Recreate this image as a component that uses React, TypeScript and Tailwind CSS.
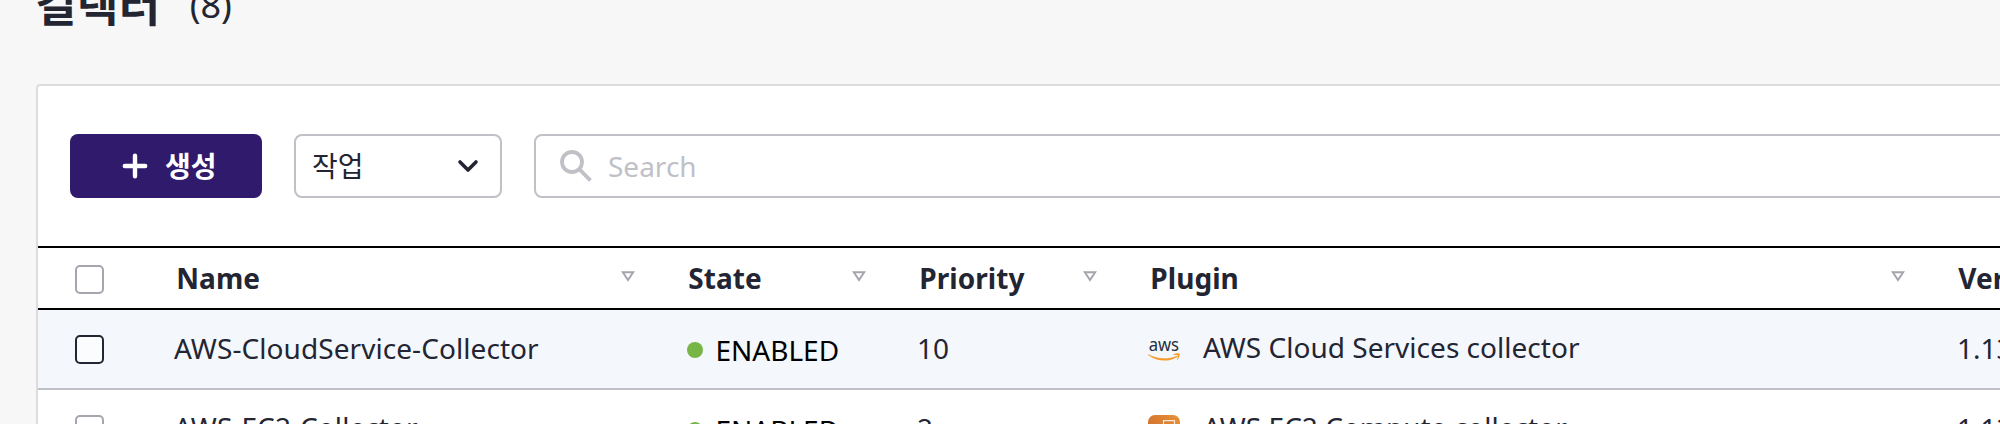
import type { ReactNode } from "react";

const GRID = "grid grid-cols-[106px_512px_231px_231px_808px_400px]";

function Checkbox({ active = false }: { active?: boolean }) {
  return (
    <span
      className={
        active
          ? "block size-[29px] rounded-[5px] border-2 border-[#232533] bg-white/60"
          : "block size-[29px] rounded-[5px] border-2 border-[#a5a5ae] bg-white"
      }
    />
  );
}

function HeadCell({ label }: { label: string }) {
  return (
    <div className="flex items-center justify-between pl-[32.3px] pr-[21px]">
      <span className="text-[28px] leading-[40px] font-bold tracking-[0.05px]">{label}</span>
      <svg className="mb-[4px] h-[11px] w-[14px]" viewBox="0 0 14 11" fill="none">
        <path d="M1.8 1.2h10.4L7 9z" stroke="#a5a5ae" strokeWidth="2" />
      </svg>
    </div>
  );
}

function AwsLogo() {
  return (
    <svg className="size-[32px]" viewBox="0 0 32 32">
      <text
        x="0.7"
        y="16"
        fontSize="18.5"
        textLength="30.4"
        lengthAdjust="spacingAndGlyphs"
        fill="#252f3e"
        className="font-['Noto_Sans',sans-serif]"
      >
        aws
      </text>
      <path d="M0.4 19.2C9 24.2 20 24.200 28.6 20.900c.8-.3 1.300.5.6 1C21.500 27.200 8.500 27 .2 19.900c-.4-.4-.2-.9.2-.7z" fill="#f79d34" />
      <path d="M25.400 19.400c1.900-1.400 4.800-1.400 5.900-.8.900.8-.1 4.600-1.900 6.200-.4.300-.8.100-.5-.4.600-1.300 1.200-3.300.7-3.900-.5-.6-2.700-.4-4-.2-.5 0-.6-.6-.2-.9z" fill="#f79d34" />
    </svg>
  );
}

function Ec2Logo() {
  return (
    <svg className="size-[32px]" viewBox="0 0 32 32">
      <defs>
        <linearGradient id="ec2" x1="0" y1="1" x2="1" y2="0">
          <stop offset="0" stopColor="#c4622c" />
          <stop offset="1" stopColor="#e99238" />
        </linearGradient>
      </defs>
      <rect width="32" height="32" rx="7" fill="url(#ec2)" />
      <path d="M15.500 9V5.600h11v11H23M5.500 9.500h17v17h-17z" fill="none" stroke="#fff" strokeOpacity="0.8" strokeWidth="1.200" />
    </svg>
  );
}

interface Collector {
  name: string;
  priority: string;
  plugin: string;
  version: string;
  logo: ReactNode;
  active?: boolean;
}

const collectors: Collector[] = [
  { name: "AWS-CloudService-Collector", priority: "10", plugin: "AWS Cloud Services collector", version: "1.13", logo: <AwsLogo />, active: true },
  { name: "AWS-EC2-Collector", priority: "2", plugin: "AWS EC2 Compute collector", version: "1.13", logo: <Ec2Logo /> },
];

function Row({ item }: { item: Collector }) {
  return (
    <div className={`${GRID} h-[80px] border-b-2 border-[#c0c0c7] ${item.active ? "bg-[#f4f7fc]" : "bg-white"}`}>
      <div className="flex items-center pt-[1px] pl-[37px]">
        <Checkbox active={item.active} />
      </div>
      <div className={`flex items-center pl-[30px] tracking-[0.07px] ${item.active ? "pb-[2px]" : "pb-[4px]"}`}>{item.name}</div>
      <div className="flex items-center pl-[31px] text-black">
        <span className="mt-[2px] mr-[12.5px] size-[16px] shrink-0 rounded-full bg-[#77b547]" />
        <span className="pt-[2px]">ENABLED</span>
      </div>
      <div className="flex items-center pb-[2px] pl-[30px]">{item.priority}</div>
      <div className="flex items-center gap-[23px] pl-[30px]">
        <span className="pt-[3px]">{item.logo}</span>
        <span className="pb-[4px] tracking-[0.02px]">{item.plugin}</span>
      </div>
      <div className="flex items-center pb-[2px] pl-[31px]">{item.version}</div>
    </div>
  );
}

export default function App() {
  return (
    <div className="flex h-[424px] w-[2000px] flex-col overflow-hidden bg-[#f7f7f7] font-['Noto_Sans','Noto_Sans_CJK_KR',sans-serif] text-[28px] leading-[40px] text-[#232533]">
      <header className="-mt-[35px] mb-[39px] flex h-[80px] shrink-0 items-center gap-[29px] pl-[35px]">
        <h1 className="text-[45px] leading-[60px] font-bold tracking-[0.5px]">컬렉터</h1>
        <span className="text-[36px] leading-[50px]">(8)</span>
      </header>
      <main className="ml-[36px] w-[2200px] shrink-0 rounded-tl-[4px] border-2 border-[#dcdcde] bg-white">
        <div className="flex h-[160px] items-center gap-[32px] pl-[32px]">
          <button className="flex h-[64px] w-[192px] items-center rounded-[8px] bg-[#2f1a6b] pl-[52px] font-bold text-white">
            <svg className="mr-[17px] size-[26px]" viewBox="0 0 26 26" stroke="#fff" strokeWidth="4.4" strokeLinecap="round">
              <path d="M13 2.800v20.400M2.800 13h20.400" />
            </svg>
            생성
          </button>
          <button className="flex h-[64px] w-[208px] items-center justify-between rounded-[8px] border-2 border-[#c0c0c7] bg-white pr-[21px] pl-[16px]">
            작업
            <svg className="h-[14px] w-[22px]" viewBox="0 0 22 14" fill="none" stroke="#232533" strokeWidth="3.6" strokeLinecap="round" strokeLinejoin="round">
              <path d="M3 3l8 8 8-8" />
            </svg>
          </button>
          <div className="flex h-[64px] flex-1 items-center gap-[16px] rounded-[8px] border-2 border-[#c0c0c7] pl-[24px] text-[#c0c0c7]">
            <svg className="size-[32px]" viewBox="0 0 32 32" fill="none" stroke="currentColor" strokeWidth="3.8">
              <circle cx="12" cy="12" r="10" />
              <path d="M19.200 19.200L30.500 30.500" />
            </svg>
            <span>Search</span>
          </div>
        </div>
        <div className={`${GRID} h-[64px] border-y-2 border-black`}>
          <div className="flex items-center pt-[3px] pl-[37px]">
            <Checkbox />
          </div>
          {["Name", "State", "Priority", "Plugin", "Version"].map((label) => (
            <HeadCell key={label} label={label} />
          ))}
        </div>
        {collectors.map((item) => (
          <Row key={item.name} item={item} />
        ))}
      </main>
    </div>
  );
}
